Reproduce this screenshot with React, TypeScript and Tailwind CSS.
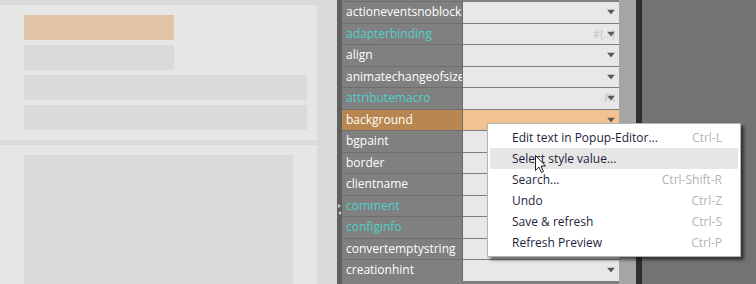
import React from 'react';

type Prop = { name: string; link?: boolean; hint?: string; arrow?: boolean };

const props: Prop[] = [
  { name: 'actioneventsnoblocking', arrow: true },
  { name: 'adapterbinding', link: true, hint: '#{...}', arrow: true },
  { name: 'align', arrow: true },
  { name: 'animatechangeofsize', arrow: true },
  { name: 'attributemacro', link: true, hint: 'FX', arrow: true },
  { name: 'background', arrow: true },
  { name: 'bgpaint' },
  { name: 'border' },
  { name: 'clientname' },
  { name: 'comment', link: true },
  { name: 'configinfo', link: true },
  { name: 'convertemptystring' },
  { name: 'creationhint', arrow: true },
];

const menu = [
  { label: 'Edit text in Popup-Editor...', key: 'Ctrl-L' },
  { label: 'Select style value...', key: '' },
  { label: 'Search...', key: 'Ctrl-Shift-R' },
  { label: 'Undo', key: 'Ctrl-Z' },
  { label: 'Save & refresh', key: 'Ctrl-S' },
  { label: 'Refresh Preview', key: 'Ctrl-P' },
];

const Arrow = () => (
  <svg width="8" height="5" viewBox="0 0 8 5" className="absolute right-[4px] top-1/2 -translate-y-1/2">
    <path d="M0 0 L8 0 L4 5 Z" fill="#5a5a5a" />
  </svg>
);

const App = () => {
  return (
    <div className="relative flex h-[284px] w-[756px] overflow-hidden font-['Open_Sans',sans-serif]">
      {/* preview area */}
      <div className="flex w-[317px] flex-col bg-[#dadada] pt-[5px]">
        <div className="flex h-[135px] flex-col gap-[5px] bg-[#e6e6e6] px-[24px] pt-[10px]">
          <div className="h-[25px] w-[150px] bg-[#e1c3a5]" />
          <div className="h-[25px] w-[150px] bg-[#dadada]" />
          <div className="h-[25px] w-[283px] bg-[#dadada]" />
          <div className="h-[25px] w-[283px] bg-[#dadada]" />
        </div>
        <div className="mt-[5px] flex flex-1 bg-[#e6e6e6] px-[24px] pt-[10px]">
          <div className="flex-1 bg-[#dadada]" />
        </div>
      </div>
      <div className="w-[20px] bg-[#dadada]" />
      <div className="relative w-[5px] bg-[#5f5f5f]">
        <svg width="5" height="12" viewBox="0 0 5 12" className="absolute left-[1px] top-[204px]">
          <path d="M0 0 L3 2 L0 4 Z" fill="#cfcfcf" />
          <path d="M3 7 L0 9 L3 11 Z" fill="#cfcfcf" />
        </svg>
      </div>

      {/* property grid */}
      <div className="flex w-[277px] flex-col bg-[#808080] pt-[1px]">
        {props.map((p) => {
          const sel = p.name === 'background';
          return (
            <div key={p.name} className="flex h-[21.5px] shrink-0">
              <div
                className={`flex w-[120px] items-center overflow-hidden whitespace-nowrap border-t border-[#6e6e6e] pl-[4px] text-[12px] ${
                  sel ? 'bg-[#b8874f]' : 'bg-[#808080]'
                } ${p.link ? 'text-[#4fd0c8]' : 'text-white'}`}
              >
                {p.name}
              </div>
              <div className="w-[1px] bg-[#6a6a6a]" />
              <div
                className={`relative flex-1 border-t border-[#7d7d7d] ${sel ? 'bg-[#f2c290]' : 'bg-[#e8e8e8]'}`}
              >
                {p.hint && (
                  <span className="absolute right-[4px] top-1/2 -translate-y-1/2 text-[10px] text-[#bdbdbd]">
                    {p.hint}
                  </span>
                )}
                {p.arrow && <Arrow />}
              </div>
            </div>
          );
        })}
      </div>

      <div className="w-[17px] bg-[#a6a6a6]" />
      <div className="w-[6px] bg-[#2e2e2e]" />
      <div className="flex-1 bg-[#737373]" />

      {/* context menu */}
      <div className="absolute left-[487px] top-[123px] w-[254px] border border-[#b4b4b4] bg-white py-[3px] shadow-[3px_3px_3px_rgba(0,0,0,0.55)]">
        {menu.map((m, i) => (
          <div
            key={m.label}
            className={`mx-[2px] flex h-[21px] items-center justify-between pl-[22px] pr-[16px] text-[12px] ${
              i === 1 ? 'bg-[#e6e6e6]' : ''
            }`}
          >
            <span className="text-[#1e1e3c]">{m.label}</span>
            <span className="text-[#b3b3b3]">{m.key}</span>
          </div>
        ))}
      </div>

      {/* mouse pointer */}
      <svg width="12" height="19" viewBox="0 0 12 19" className="absolute left-[535px] top-[155px]">
        <path d="M0.5 0.5 L0.5 15.5 L4 12 L6.5 17.5 L8.5 16.5 L6 11 L10.5 11 Z" fill="white" stroke="#222" strokeWidth="1" />
      </svg>
    </div>
  );
};

export default App;
